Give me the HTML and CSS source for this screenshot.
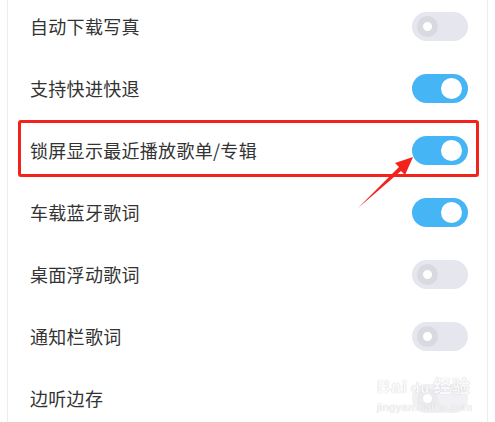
FILE: index.html
```html
<!DOCTYPE html>
<html lang="zh-CN">

<head>
    <meta charset="UTF-8">
    <meta name="viewport" content="width=device-width, initial-scale=1.0">
    <title>设置</title>
    <link rel="stylesheet" href="styles.css">
</head>

<body>
    <div class="panel">
        <ul class="settings">
            <li class="row">
                <span class="label">自动下载写真</span>
                <span class="switch off"></span>
            </li>
            <li class="row">
                <span class="label">支持快进快退</span>
                <span class="switch on"></span>
            </li>
            <li class="row marked">
                <span class="label">锁屏显示最近播放歌单/专辑</span>
                <span class="switch on"></span>
            </li>
            <li class="row">
                <span class="label">车载蓝牙歌词</span>
                <span class="switch on"></span>
            </li>
            <li class="row">
                <span class="label">桌面浮动歌词</span>
                <span class="switch off"></span>
            </li>
            <li class="row">
                <span class="label">通知栏歌词</span>
                <span class="switch off"></span>
            </li>
            <li class="row">
                <span class="label">边听边存</span>
                <span class="switch off faint"></span>
            </li>
        </ul>
    </div>

    <!-- annotation arrow -->
    <svg class="arrow" width="495" height="422" viewBox="0 0 495 422">
        <polygon points="413,157 405,175 401,171 358,208 399,167 395,163" fill="#f2231b" />
    </svg>

    <div class="watermark">
        <div class="wm-logo">Bai<span class="wm-du">du</span>经验</div>
        <div class="wm-url">jingyan.baidu.com</div>
    </div>
</body>

</html>
```

FILE: styles.css
```css
body {
    font-family: "Noto Sans CJK SC", "Noto Sans", sans-serif;
    margin: 0;
    padding: 0;
    background: #fff;
    color: #333;
    width: 495px;
    height: 422px;
    overflow: hidden;
    position: relative;
}

.panel {
    margin: 0 7px;
    height: 422px;
    border-left: 1px solid #ececec;
    border-right: 1px solid #ececec;
    overflow: hidden;
}

.settings {
    list-style: none;
    margin: -5px 0 0;
    padding: 0;
}

.row {
    height: 62px;
    display: flex;
    align-items: center;
    justify-content: space-between;
    padding: 0 19px 0 22px;
    position: relative;
}

.label {
    font-size: 18px;
    color: #333;
    letter-spacing: 0.3px;
}

.switch {
    width: 56px;
    height: 29px;
    border-radius: 15px;
    position: relative;
    flex-shrink: 0;
}

.switch::after {
    content: "";
    position: absolute;
    top: 4px;
    width: 21px;
    height: 21px;
    border-radius: 50%;
    box-sizing: border-box;
}

.switch.on {
    background: #45b5f6;
}

.switch.on::after {
    right: 6px;
    background: #fff;
}

.switch.off {
    background: #e6e6ee;
}

.switch.off::after {
    left: 5px;
    background: #fff;
    border: 6px solid #d9d9e2;
}

.switch.faint {
    opacity: 0.55;
}

.marked::before {
    content: "";
    position: absolute;
    left: 10px;
    right: 8px;
    top: 1px;
    bottom: 4px;
    border: 3px solid #f2231b;
    border-radius: 3px;
}

.arrow {
    position: absolute;
    left: 0;
    top: 0;
    pointer-events: none;
}

.watermark {
    position: absolute;
    left: 377px;
    top: 377px;
    color: #fafafa;
    text-shadow: 0 0 1px #bdbdbd;
    font-family: "Liberation Sans", "Noto Sans CJK SC", sans-serif;
}

.wm-logo {
    font-size: 18px;
    font-weight: bold;
    line-height: 20px;
    letter-spacing: 1px;
}

.wm-du {
    font-size: 14px;
    margin: 0 3px;
}

.wm-url {
    font-size: 11px;
    line-height: 13px;
    letter-spacing: 0.4px;
    margin-top: 3px;
}
```
